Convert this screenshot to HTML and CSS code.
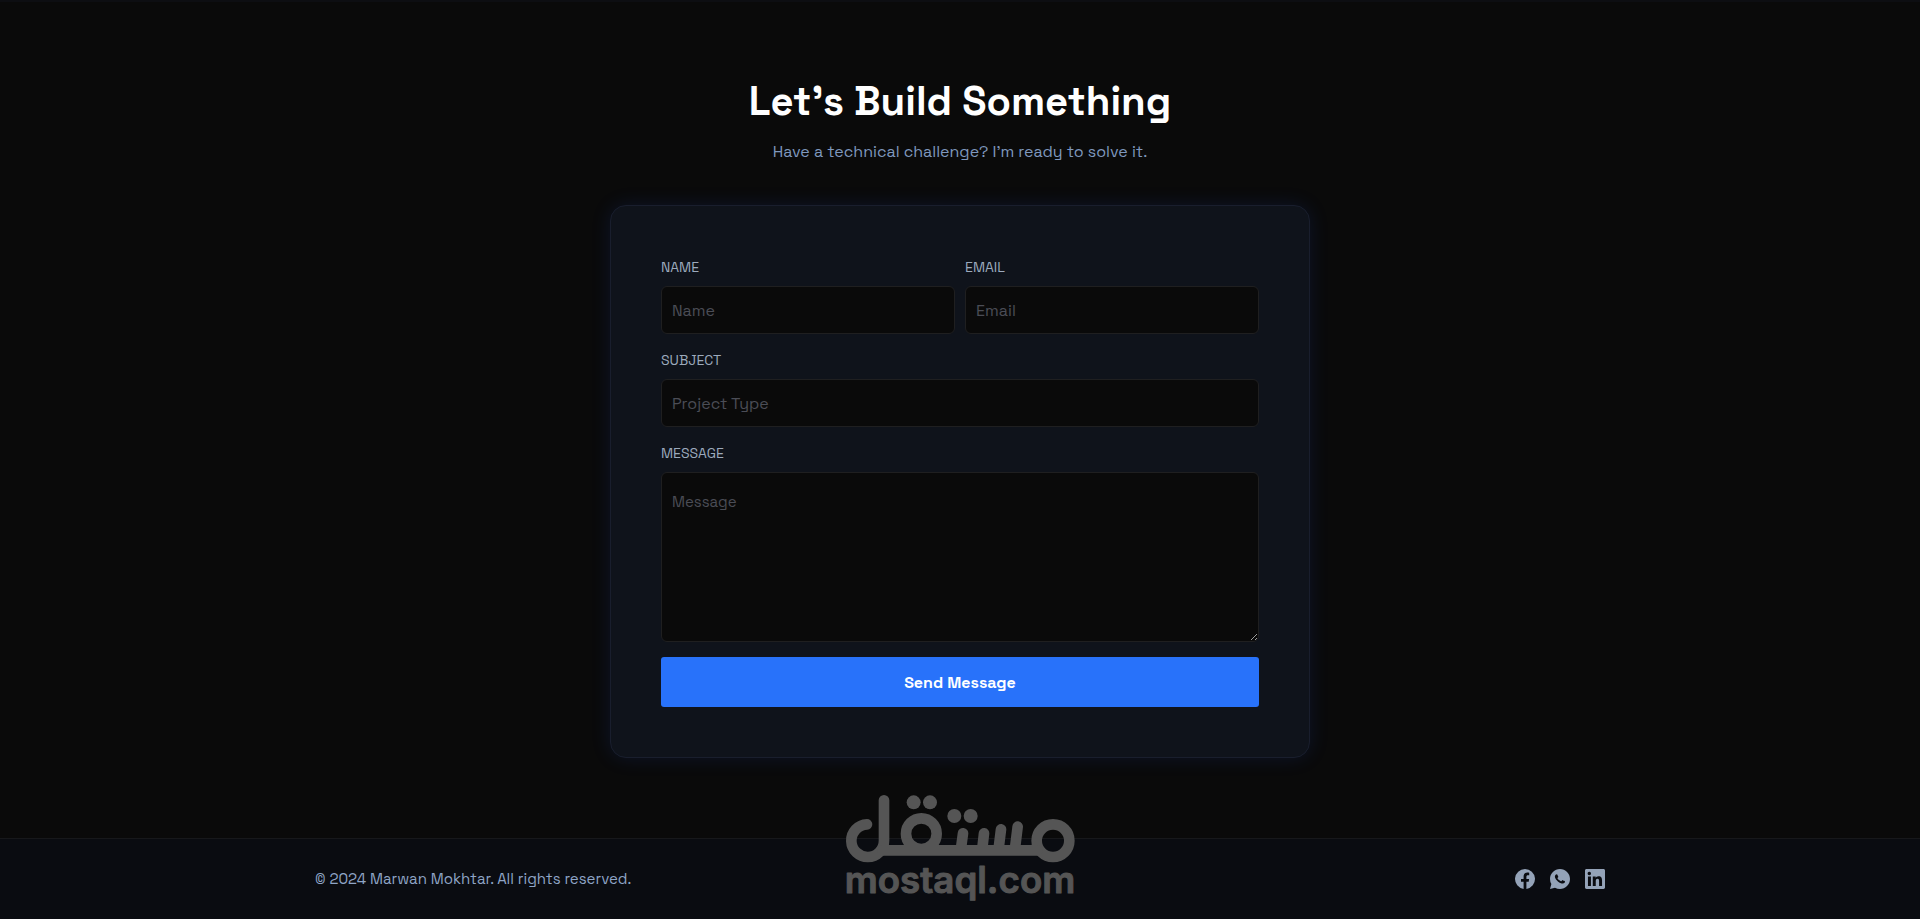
FILE: index.html
```html
<!DOCTYPE html>
<html lang="en">
<head>
<meta charset="utf-8">
<meta name="viewport" content="width=device-width, initial-scale=1">
<title>Contact</title>
<link rel="stylesheet" href="styles.css">
</head>
<body>
<main class="contact">
  <h1 class="contact-title">Let’s Build Something</h1>
  <p class="contact-lead">Have a technical challenge? I’m ready to solve it.</p>
  <form class="card">
    <div class="row">
      <div class="field">
        <label for="name">Name</label>
        <input id="name" type="text" placeholder="Name">
      </div>
      <div class="field">
        <label for="email">Email</label>
        <input id="email" type="email" placeholder="Email">
      </div>
    </div>
    <div class="field">
      <label for="subject">Subject</label>
      <input id="subject" type="text" placeholder="Project Type">
    </div>
    <div class="field">
      <label for="message">Message</label>
      <textarea id="message" placeholder="Message"></textarea>
    </div>
    <button class="send" type="submit">Send Message</button>
  </form>
</main>
<footer class="footer">
  <div class="footer-inner">
    <p class="copyright">© 2024 Marwan Mokhtar. All rights reserved.</p>
    <nav class="social" aria-label="Social links">
      <a href="#" aria-label="Facebook"><svg viewBox="0 0 20 20"><path d="M10 0a10 10 0 0 0-1.4 19.9v-7.2H6V10h2.600V7.700c0-2.600 1.400-4.100 3.700-4.100.8 0 1.900.2 1.900.2v2.500h-1.200c-1.200 0-1.600.7-1.600 1.500V10h2.700l-.4 2.700h-2.300v7.200A10 10 0 0 0 10 0z"/></svg></a>
      <a href="#" aria-label="WhatsApp"><svg viewBox="2 2 20 20"><path fill-rule="evenodd" d="M2 22l1.36-4.97A9.95 9.95 0 0 1 2 12C2 6.48 6.48 2 12 2s10 4.48 10 10-4.480 10-10 10a9.95 9.95 0 0 1-5.03-1.36L2 22zM8.39 7.31c-.13.01-.26.04-.37.1-.11.06-.21.14-.29.23-.12.11-.19.21-.26.3A2.73 2.73 0 0 0 6.9 9.62c0 .49.13.97.33 1.41.41.9 1.08 1.86 1.97 2.75.21.21.42.42.65.62a9.45 9.45 0 0 0 3.84 2.05l.57.08c.18.01.37 0 .55-.01.29-.01.58-.09.84-.23.17-.09.25-.13.38-.22l.13-.09c.13-.1.22-.17.33-.29.08-.08.15-.19.21-.3.08-.16.15-.47.18-.73.03-.2.02-.31.02-.38-.01-.1-.1-.21-.19-.26l-.59-.26s-.87-.38-1.4-.62a.52.52 0 0 0-.55.09c-.01 0-.07.05-.8.93a.35.35 0 0 1-.36.13 1.4 1.4 0 0 1-.19-.07c-.13-.05-.17-.07-.25-.11a5.93 5.93 0 0 1-1.57-1c-.13-.11-.24-.23-.36-.34a6.3 6.3 0 0 1-1.02-1.27l-.06-.09a.92.92 0 0 1-.1-.21c-.04-.15.06-.27.06-.27s.24-.27.36-.41c.11-.14.2-.28.26-.38.12-.19.16-.38.09-.53-.27-.66-.55-1.32-.84-1.97-.06-.13-.23-.22-.39-.24l-.16-.02a3.4 3.4 0 0 0-.41 0z"/></svg></a>
      <a href="#" aria-label="LinkedIn"><svg viewBox="3 3 18 18"><path d="M18.34 18.34h-2.67v-4.18c0-1-.02-2.28-1.39-2.28s-1.6 1.09-1.6 2.21v4.25h-2.67V9.75h2.56v1.17h.04c.36-.67 1.23-1.39 2.53-1.39 2.7 0 3.2 1.78 3.2 4.1v4.71zM7 8.57a1.55 1.55 0 1 1 0-3.09 1.55 1.55 0 0 1 0 3.09zm1.34 9.77H5.67V9.75h2.67v8.59zM19.67 3H4.33C3.6 3 3 3.58 3 4.3v15.4c0 .72.6 1.3 1.33 1.3h15.34c.73 0 1.33-.58 1.33-1.3V4.3c0-.72-.6-1.3-1.33-1.3z"/></svg></a>
    </nav>
  </div>
</footer>
<svg class="watermark" viewBox="0 0 840 417" role="img" aria-label="mostaql.com">
  <g class="mark-lines">
    <path d="M141 133A49 49 0 1 0 192 182V61"/>
    <circle cx="304" cy="161" r="46"/>
    <circle cx="699" cy="182" r="49"/>
    <path d="M188 211H652M429 160L423 205M492 160L487 205M543 148L536 205M593 140L585 205"/>
  </g>
  <g class="mark-fill">
    <circle cx="281" cy="67" r="21"/>
    <circle cx="330" cy="67" r="21"/>
    <circle cx="403" cy="108" r="21"/>
    <circle cx="452" cy="108" r="21"/>
  </g>
  <text class="mark-name" x="420" y="338" text-anchor="middle">mostaql.com</text>
</svg>
</body>
</html>
```
FILE: styles.css
```css
* {
  box-sizing: border-box;
}

body {
  margin: 0;
  min-height: 100vh;
  display: flex;
  flex-direction: column;
  position: relative;
  background: #0a0a0a;
  color: #94a3b8;
  font-family: "Space Grotesk", Inter, sans-serif;
  font-size: 16px;
  line-height: 26px;
}

.contact {
  flex: 1;
  padding: 80px 20px;
  border-top: 2px solid #0d0e12;
}

.contact-title {
  margin: 0 0 17px;
  color: #fff;
  font-size: 40px;
  font-weight: 700;
  line-height: 40px;
  text-align: center;
}

.contact-lead {
  margin: 0 0 40px;
  color: #7f98be;
  text-align: center;
}

.card {
  display: flex;
  flex-direction: column;
  gap: 15px;
  max-width: 700px;
  margin: 0 auto;
  padding: 50px;
  background: #0f131b;
  border: 1px solid #191e2d;
  border-radius: 16px;
  box-shadow: 0 0 20px rgba(40, 90, 250, 0.13);
}

.row {
  display: grid;
  grid-template-columns: 1fr 1fr;
  gap: 10px;
}

.field {
  display: flex;
  flex-direction: column;
  gap: 8px;
}

.field label {
  color: #9caabd;
  font-size: 14px;
  font-weight: 400;
  line-height: 22px;
  text-transform: uppercase;
}

.field input,
.field textarea {
  width: 100%;
  padding: 0 10px;
  background: #0a0a0a;
  border: 1px solid #1f1f20;
  border-radius: 6px;
  color: #fff;
  font: inherit;
}

.field input {
  height: 48px;
}

.field textarea {
  display: block;
  height: 170px;
  padding-top: 16px;
  font-size: 15px;
  resize: vertical;
}

.field ::placeholder {
  color: #4b4d56;
  opacity: 1;
}

.send {
  height: 50px;
  padding: 2px 20px 0;
  border: 0;
  border-radius: 3px;
  background: #2872fa;
  color: #fff;
  font: inherit;
  font-weight: 700;
}

.footer {
  padding: 30px 20px;
  background: #0a0c11;
  border-top: 1px solid #17181b;
}

.footer-inner {
  display: flex;
  align-items: center;
  justify-content: space-between;
  max-width: 1290px;
  margin: 0 auto;
}

.copyright {
  margin: 0;
  color: #8fa5c6;
  font-size: 15px;
  line-height: 20px;
}

.social {
  display: flex;
  gap: 15px;
}

.social a,
.social svg {
  display: block;
  width: 20px;
  height: 20px;
  fill: #94a3b8;
}

.watermark {
  position: absolute;
  bottom: 0;
  left: 50%;
  width: 280px;
  margin-left: -140px;
  color: #555;
  pointer-events: none;
}

.mark-lines {
  fill: none;
  stroke: currentColor;
  stroke-width: 32;
  stroke-linecap: round;
}

.mark-fill {
  fill: currentColor;
}

.mark-name {
  fill: currentColor;
  stroke: currentColor;
  stroke-width: 3;
  stroke-linejoin: round;
  font-family: Inter, "Liberation Sans", sans-serif;
  font-size: 110px;
  font-weight: 600;
}
```
